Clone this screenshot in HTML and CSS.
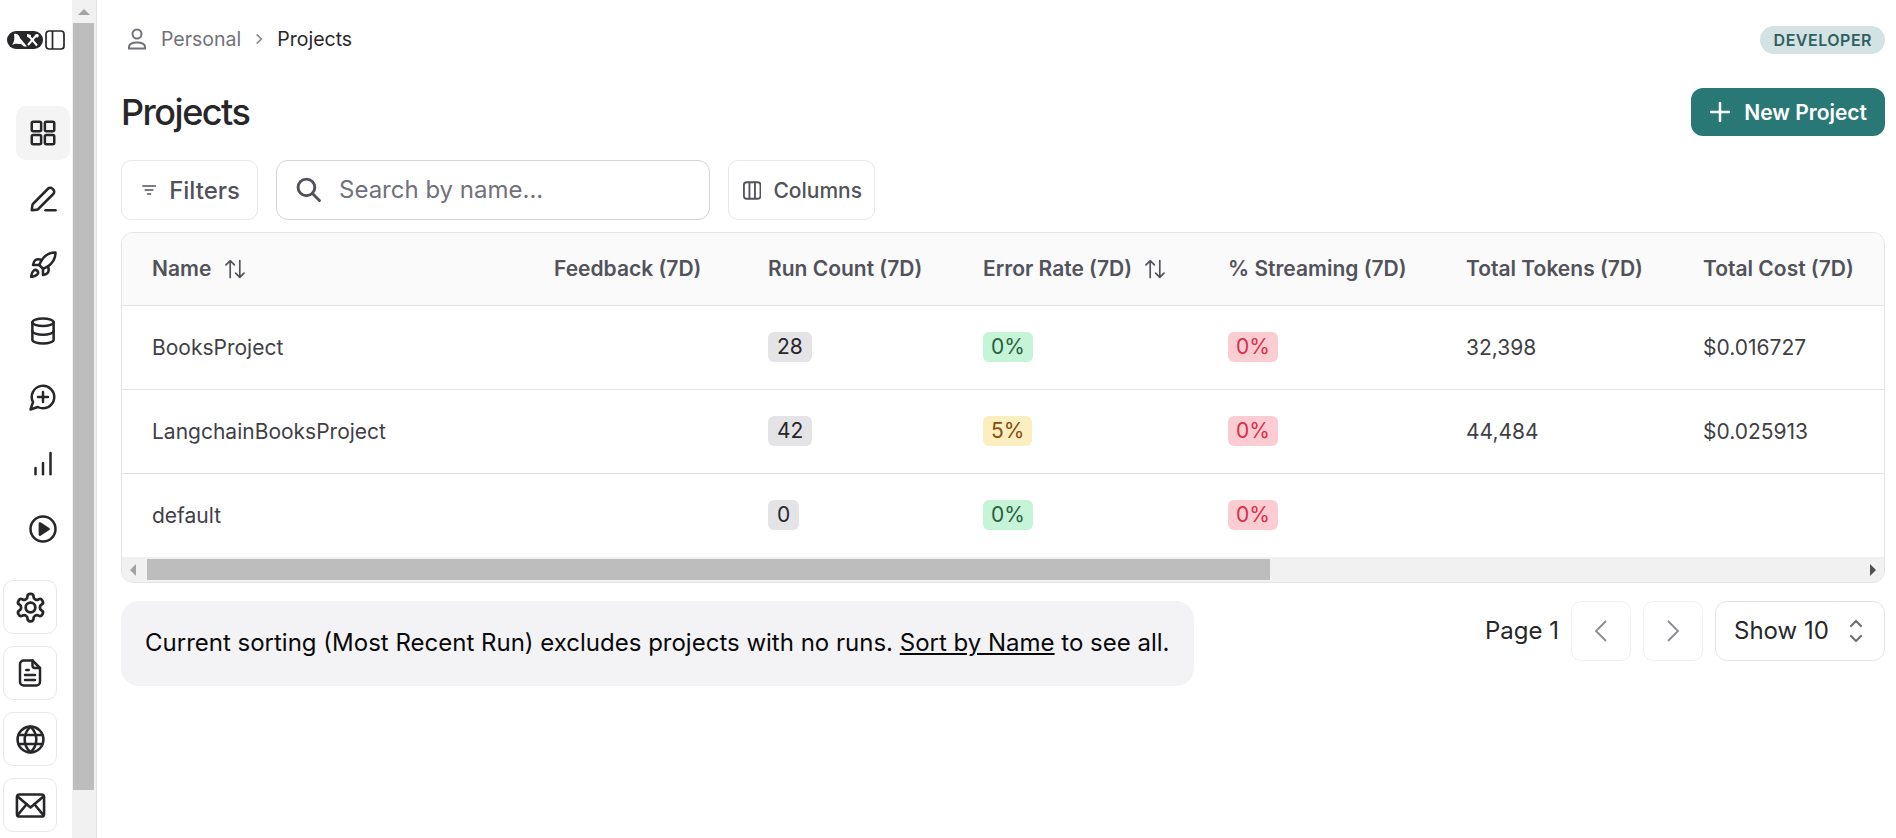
FILE: index.html
```html
<!DOCTYPE html>
<html lang="en">

<head>
  <meta charset="UTF-8">
  <meta name="viewport" content="width=device-width, initial-scale=1.0">
  <title>Projects</title>

  <link rel="stylesheet" href="styles.css">
</head>

<body>
  <div class="app">
    <aside class="sidebar">
      <div class="brand">
        <svg class="logo" viewBox="0 0 36 18">
          <rect width="36" height="18" rx="9" fill="#27272a" />
          <path d="M7 3c3-1 5 1 6 4l5 6 2 2.500h-3l-3-2.500c-3 0-6-1-9 1 2-3 3-6 2-11z" fill="#fff" />
          <path d="M21.500 4.500l8.500 10M30 3.500l-9 10.500" stroke="#fff" stroke-width="2" fill="none" />
          <path d="M20 3l4 1-1 3-3-1zM28 4l3-1 1 2-2 2z" fill="#fff" />
        </svg>
        <svg class="panel-icon" viewBox="0 0 20 20" fill="none" stroke="#27272a" stroke-width="1.700">
          <rect x="1" y="1" width="18" height="18" rx="3" />
          <path d="M7.500 1v18" />
        </svg>
      </div>

      <nav class="nav-main">
        <a class="nav-item active">
          <svg class="icon" viewBox="0 0 24 24">
            <rect x="3" y="3" width="7.500" height="7.500" rx="1.200" />
            <rect x="13.500" y="3" width="7.500" height="7.500" rx="1.200" />
            <rect x="3" y="13.500" width="7.500" height="7.500" rx="1.200" />
            <rect x="13.500" y="13.500" width="7.500" height="7.500" rx="1.200" />
          </svg>
        </a>
        <a class="nav-item">
          <svg class="icon" viewBox="0 0 24 24">
            <path d="M14 21h8" />
            <path d="M3 21l.5-4a2 2 0 0 1 .6-1.200L16 3.800a2.500 2.500 0 0 1 3.600 0l.6.6a2.500 2.500 0 0 1 0 3.600L8.200 20a2 2 0 0 1-1.200.6z" />
          </svg>
        </a>
        <a class="nav-item">
          <svg class="icon" viewBox="0 0 24 24">
            <path d="M4.500 16.500c-1.500 1.260-2 5-2 5s3.740-.5 5-2c.71-.84.7-2.130-.09-2.910a2.180 2.180 0 0 0-2.910-.09z" />
            <path d="m12 15-3-3a22 22 0 0 1 2-3.950A12.880 12.880 0 0 1 22 2c0 2.720-.78 7.500-6 11a22.350 22.350 0 0 1-4 2z" />
            <path d="M9 12H4s.55-3.030 2-4c1.620-1.080 5 0 5 0" />
            <path d="M12 15v5s3.030-.55 4-2c1.080-1.620 0-5 0-5" />
          </svg>
        </a>
        <a class="nav-item">
          <svg class="icon" viewBox="0 0 24 24">
            <ellipse cx="12" cy="5" rx="8.500" ry="3" />
            <path d="M3.500 5v14a8.500 3 0 0 0 17 0V5" />
            <path d="M3.500 12a8.500 3 0 0 0 17 0" />
          </svg>
        </a>
        <a class="nav-item">
          <svg class="icon" viewBox="0 0 24 24">
            <path d="M7.900 20A9 9 0 1 0 4 16.100L2 22z" />
            <path d="M8 12h8" />
            <path d="M12 8v8" />
          </svg>
        </a>
        <a class="nav-item">
          <svg class="icon" viewBox="0 0 24 24">
            <path d="M6 21v-5" />
            <path d="M12 21v-9" />
            <path d="M18 21V4" />
          </svg>
        </a>
        <a class="nav-item">
          <svg class="icon" viewBox="0 0 24 24">
            <circle cx="12" cy="12" r="10" />
            <path d="M9.500 7.500l7 4.500-7 4.500z" fill="#27272a" />
          </svg>
        </a>
      </nav>

      <div class="nav-bottom">
        <a class="nav-box">
          <svg class="icon icon-lg" viewBox="0 0 24 24">
            <path d="M12.220 2h-.44a2 2 0 0 0-2 2v.18a2 2 0 0 1-1 1.730l-.43.25a2 2 0 0 1-2 0l-.15-.08a2 2 0 0 0-2.730.73l-.22.38a2 2 0 0 0 .73 2.730l.15.1a2 2 0 0 1 1 1.720v.51a2 2 0 0 1-1 1.740l-.15.09a2 2 0 0 0-.73 2.730l.22.38a2 2 0 0 0 2.730.73l.15-.08a2 2 0 0 1 2 0l.43.25a2 2 0 0 1 1 1.730V20a2 2 0 0 0 2 2h.44a2 2 0 0 0 2-2v-.18a2 2 0 0 1 1-1.730l.43-.25a2 2 0 0 1 2 0l.15.08a2 2 0 0 0 2.730-.73l.22-.39a2 2 0 0 0-.73-2.730l-.15-.08a2 2 0 0 1-1-1.740v-.5a2 2 0 0 1 1-1.740l.15-.09a2 2 0 0 0 .73-2.730l-.22-.38a2 2 0 0 0-2.730-.73l-.15.08a2 2 0 0 1-2 0l-.43-.25a2 2 0 0 1-1-1.730V4a2 2 0 0 0-2-2z" />
            <circle cx="12" cy="12" r="3.500" />
          </svg>
        </a>
        <a class="nav-box">
          <svg class="icon" viewBox="0 0 24 24">
            <path d="M14 2H7a3 3 0 0 0-3 3v14a3 3 0 0 0 3 3h10a3 3 0 0 0 3-3V8z" />
            <path d="M14 2v4a2 2 0 0 0 2 2h4" />
            <path d="M9 9.500h2" />
            <path d="M8 13.500h8" />
            <path d="M8 17.500h8" />
          </svg>
        </a>
        <a class="nav-box">
          <svg class="icon icon-md" viewBox="0 0 24 24">
            <circle cx="12" cy="12" r="10" />
            <path d="M12 2c3 2.800 4.500 6.200 4.500 10s-1.500 7.200-4.500 10c-3-2.800-4.500-6.200-4.500-10S9 4.800 12 2z" />
            <path d="M3 8.500h18" />
            <path d="M3 15.500h18" />
          </svg>
        </a>
        <a class="nav-box">
          <svg class="icon icon-md" viewBox="0 0 24 24">
            <rect x="1.500" y="3.500" width="21" height="17" rx="2" />
            <path d="M2 5l10 8.500L22 5" />
            <path d="M2 19.500l7-8.500" />
            <path d="M22 19.500l-7-8.500" />
          </svg>
        </a>
      </div>
    </aside>

    <div class="page-scrollbar">
      <div class="scroll-btn"><span class="arrow-up"></span></div>
      <div class="page-thumb"></div>
    </div>

    <main class="main">
      <header class="topbar">
        <div class="crumbs">
          <svg class="crumb-user" viewBox="0 0 24 24">
            <circle cx="12" cy="7" r="4.500" />
            <path d="M4 21.500v-1.500c0-3 2.500-4.500 8-4.500s8 1.500 8 4.500v1.500z" />
          </svg>
          <span class="crumb-muted">Personal</span>
          <svg class="crumb-sep" viewBox="0 0 10 12">
            <path d="M3 2l4 4-4 4" />
          </svg>
          <span>Projects</span>
        </div>
        <span class="tier">DEVELOPER</span>
      </header>

      <div class="title-row">
        <h1>Projects</h1>
        <button class="btn-primary">
          <svg viewBox="0 0 20 20">
            <path d="M10 1v18M1 10h18" />
          </svg>
          New Project
        </button>
      </div>

      <div class="toolbar">
        <button class="btn-filter">
          <svg viewBox="0 0 18 14">
            <path d="M1 2h16M4 7h10M7 12h4" />
          </svg>
          Filters
        </button>
        <label class="search">
          <svg viewBox="0 0 24 24">
            <circle cx="10" cy="10" r="8" />
            <path d="M16 16l6.500 6.500" />
          </svg>
          <span>Search by name...</span>
        </label>
        <button class="btn-columns">
          <svg viewBox="0 0 20 20">
            <rect x="1" y="1" width="18" height="18" rx="3" />
            <path d="M7 1v18M13 1v18" />
          </svg>
          Columns
        </button>
      </div>

      <section class="table-card">
        <table>
          <colgroup>
            <col class="c-name">
            <col class="c-feedback">
            <col class="c-runs">
            <col class="c-error">
            <col class="c-stream">
            <col class="c-tokens">
            <col class="c-cost">
          </colgroup>
          <thead>
            <tr>
              <th>Name
                <svg class="sort" viewBox="0 0 20 20">
                  <path d="M6 17V3M2.500 6.500L6 3l3.500 3.500M14 3v14M10.500 13.500L14 17l3.500-3.500" />
                </svg>
              </th>
              <th>Feedback (7D)</th>
              <th>Run Count (7D)</th>
              <th>Error Rate (7D)
                <svg class="sort" viewBox="0 0 20 20">
                  <path d="M6 17V3M2.500 6.500L6 3l3.500 3.500M14 3v14M10.500 13.500L14 17l3.500-3.500" />
                </svg>
              </th>
              <th>% Streaming (7D)</th>
              <th>Total Tokens (7D)</th>
              <th>Total Cost (7D)</th>
            </tr>
          </thead>
          <tbody>
            <tr>
              <td>BooksProject</td>
              <td></td>
              <td><span class="pill grey">28</span></td>
              <td><span class="pill green">0%</span></td>
              <td><span class="pill red">0%</span></td>
              <td>32,398</td>
              <td>$0.016727</td>
            </tr>
            <tr>
              <td>LangchainBooksProject</td>
              <td></td>
              <td><span class="pill grey">42</span></td>
              <td><span class="pill yellow">5%</span></td>
              <td><span class="pill red">0%</span></td>
              <td>44,484</td>
              <td>$0.025913</td>
            </tr>
            <tr>
              <td>default</td>
              <td></td>
              <td><span class="pill grey">0</span></td>
              <td><span class="pill green">0%</span></td>
              <td><span class="pill red">0%</span></td>
              <td></td>
              <td></td>
            </tr>
          </tbody>
        </table>
        <div class="table-scrollbar">
          <span class="arrow-left"></span>
          <div class="table-thumb"></div>
          <span class="arrow-right"></span>
        </div>
      </section>

      <div class="footer-row">
        <p class="notice">Current sorting (Most Recent Run) excludes projects with no runs. <a href="#">Sort by Name</a> to see all.</p>
        <div class="pager">
          <span class="page-label">Page 1</span>
          <button class="page-btn">
            <svg viewBox="0 0 14 24">
              <path d="M12 2L2 12l10 10" />
            </svg>
          </button>
          <button class="page-btn">
            <svg viewBox="0 0 14 24">
              <path d="M2 2l10 10L2 22" />
            </svg>
          </button>
          <div class="show-select">
            <span>Show 10</span>
            <svg viewBox="0 0 14 24">
              <path d="M2 7l5-5 5 5M2 17l5 5 5-5" />
            </svg>
          </div>
        </div>
      </div>
    </main>
  </div>
</body>

</html>
```

FILE: styles.css
```css
* {
  box-sizing: border-box;
}

html,
body {
  height: 100%;
  margin: 0;
  overflow: hidden;
}

body {
  background: #fff;
  color: #18181b;
  font-family: Inter, "Liberation Sans", sans-serif;
}

button {
  background: #fff;
  cursor: pointer;
  font-family: inherit;
}

.app {
  display: flex;
  height: 838px;
}

/* sidebar */
.sidebar {
  display: flex;
  flex-direction: column;
  flex-shrink: 0;
  width: 72px;
}

.brand {
  align-items: center;
  display: flex;
  gap: 2px;
  margin-top: 30px;
  padding-left: 7px;
}

.logo {
  height: 18px;
  width: 36px;
}

.panel-icon {
  height: 20px;
  width: 20px;
}

.nav-main {
  display: flex;
  flex-direction: column;
  gap: 12px;
  margin-top: 56px;
  padding-left: 16px;
}

.nav-item {
  align-items: center;
  border-radius: 10px;
  display: flex;
  height: 54px;
  justify-content: center;
  width: 54px;
}

.nav-item.active {
  background: #f4f4f5;
}

.icon {
  fill: none;
  height: 30px;
  stroke: #27272a;
  stroke-linecap: round;
  stroke-linejoin: round;
  stroke-width: 2;
  width: 30px;
}

.icon-md {
  height: 31px;
  width: 31px;
}

.icon-lg {
  height: 33px;
  width: 33px;
}

.nav-bottom {
  display: flex;
  flex-direction: column;
  gap: 12px;
  margin-top: 24px;
  padding-left: 3px;
}

.nav-box {
  align-items: center;
  border: 1px solid #e8e8ea;
  border-radius: 10px;
  display: flex;
  height: 54px;
  justify-content: center;
  width: 54px;
}

/* page scrollbar */
.page-scrollbar {
  background: #f1f1f1;
  border-right: 1px solid #e4e4e7;
  flex-shrink: 0;
  padding: 0 2px 0 1px;
  width: 25px;
}

.scroll-btn {
  display: flex;
  height: 23px;
  justify-content: center;
  padding-top: 9px;
}

.arrow-up {
  border-bottom: 6px solid #a3a3a3;
  border-left: 6px solid transparent;
  border-right: 6px solid transparent;
  height: 0;
  width: 0;
}

.page-thumb {
  background: #bdbdbd;
  height: 767px;
}

/* main column */
.main {
  flex: 1;
  min-width: 0;
  padding: 0 11px 0 24px;
}

.topbar {
  align-items: center;
  display: flex;
  height: 78px;
  justify-content: space-between;
}

.crumbs {
  align-items: center;
  color: #27272a;
  display: flex;
  font-size: 19.500px;
  gap: 12px;
  padding-left: 4px;
}

.crumb-user {
  fill: none;
  height: 24px;
  stroke: #71717a;
  stroke-width: 2;
  width: 24px;
}

.crumb-muted {
  color: #71717a;
}

.crumb-sep {
  fill: none;
  height: 14px;
  stroke: #8e8e96;
  stroke-width: 1.500;
  width: 12px;
}

.tier {
  align-items: center;
  background: #d3e2e2;
  border-radius: 14px;
  color: #2f5f60;
  display: flex;
  font-size: 16px;
  font-weight: 600;
  height: 28px;
  letter-spacing: 0.5px;
  margin-top: 2px;
  padding: 0 13px 0 14px;
}

.title-row {
  align-items: flex-start;
  display: flex;
  height: 82px;
  justify-content: space-between;
  padding-top: 10px;
}

h1 {
  color: #27272a;
  font-size: 36px;
  font-weight: 500;
  letter-spacing: -1.500px;
  line-height: 48px;
  margin: -10px 0 0;
  padding-top: 10px;
}

.btn-primary {
  align-items: center;
  background: #2a7876;
  border: 0;
  border-radius: 12px;
  color: #fff;
  display: flex;
  font-size: 21px;
  font-weight: 600;
  gap: 14px;
  height: 48px;
  padding: 0 18px 0 19px;
}

.btn-primary svg {
  fill: none;
  height: 20px;
  stroke: #fff;
  stroke-linecap: round;
  stroke-width: 2.500;
  width: 20px;
}

.toolbar {
  display: flex;
  gap: 18px;
}

.btn-filter,
.btn-columns {
  align-items: center;
  border: 1px solid #e8e8ea;
  border-radius: 10px;
  color: #52525b;
  display: flex;
  font-weight: 500;
  height: 60px;
  padding-bottom: 1px;
}

.btn-filter {
  font-size: 24px;
  gap: 13px;
  padding-left: 20px;
  padding-right: 17px;
  width: 137px;
}

.btn-filter svg {
  fill: none;
  height: 14px;
  stroke: #52525b;
  stroke-linecap: round;
  stroke-width: 1.800;
  width: 18px;
}

.search {
  align-items: center;
  border: 1px solid #d4d4d8;
  border-radius: 12px;
  color: #71717a;
  display: flex;
  font-size: 24px;
  gap: 18px;
  height: 60px;
  padding: 0 0 1px 19px;
  width: 434px;
}

.search svg {
  fill: none;
  height: 25px;
  stroke: #52525b;
  stroke-linecap: round;
  stroke-width: 2.800;
  width: 25px;
}

.btn-columns {
  font-size: 21px;
  gap: 12px;
  padding-left: 14px;
  padding-right: 12px;
  width: 147px;
}

.btn-columns svg {
  fill: none;
  height: 21px;
  stroke: #52525b;
  stroke-width: 2;
  width: 21px;
}

/* table */
.table-card {
  border: 1px solid #e4e4e7;
  border-radius: 12px;
  margin-top: 12px;
  overflow: hidden;
}

table {
  border-collapse: collapse;
  table-layout: fixed;
  width: 100%;
}

.c-name { width: 402px; }
.c-feedback { width: 214px; }
.c-runs { width: 215px; }
.c-error { width: 245px; }
.c-stream { width: 238px; }
.c-tokens { width: 237px; }

th {
  background: #fafafa;
  color: #52525b;
  font-size: 21px;
  font-weight: 600;
  height: 72px;
  padding: 0 0 0 30px;
  text-align: left;
  white-space: nowrap;
}

td {
  border-top: 1px solid #e4e4e7;
  color: #3f3f46;
  font-size: 21px;
  height: 84px;
  padding: 0 0 0 30px;
  white-space: nowrap;
}

.sort {
  fill: none;
  height: 24px;
  margin-left: 6px;
  stroke: #52525b;
  stroke-linecap: round;
  stroke-linejoin: round;
  stroke-width: 1.400;
  vertical-align: -5px;
  width: 24px;
}

.pill {
  border-radius: 6px;
  display: inline-block;
  line-height: 30px;
  padding: 0 9px;
}

.grey { background: #e4e4e7; color: #27272a; }
.green { background: #c6f4d6; color: #2a5f42; padding: 0 8px; }
.yellow { background: #fbeec1; color: #854d0e; padding: 0 8px; }
.red { background: #fbcdd3; color: #d92d4a; padding: 0 8px; }

.table-scrollbar {
  align-items: center;
  background: #f1f1f1;
  display: flex;
  height: 25px;
  padding: 0 8px;
}

.arrow-left {
  border-bottom: 6px solid transparent;
  border-right: 6px solid #a3a3a3;
  border-top: 6px solid transparent;
  height: 0;
  width: 0;
}

.table-thumb {
  background: #bdbdbd;
  height: 21px;
  margin-left: 11px;
  width: 1123px;
}

.arrow-right {
  border-bottom: 6px solid transparent;
  border-left: 6px solid #505050;
  border-top: 6px solid transparent;
  height: 0;
  margin-left: auto;
  width: 0;
}

/* below the table */
.footer-row {
  align-items: flex-start;
  display: flex;
  justify-content: space-between;
  margin-top: 18px;
}

.notice {
  background: #f3f3f5;
  border-radius: 18px;
  color: #09090b;
  font-size: 24px;
  margin: 0;
  padding: 27px 24px 29px;
  width: 1073px;
}

.notice a {
  color: inherit;
}

.pager {
  align-items: center;
  display: flex;
  gap: 12px;
}

.page-label {
  color: #27272a;
  font-size: 24px;
  margin-bottom: 2px;
}

.page-btn {
  align-items: center;
  border: 1px solid #f0f0f1;
  border-radius: 10px;
  display: flex;
  height: 60px;
  justify-content: center;
  padding: 0;
  width: 60px;
}

.page-btn svg {
  fill: none;
  height: 24px;
  stroke: #8a8a90;
  stroke-width: 1.800;
  width: 14px;
}

.show-select {
  align-items: center;
  border: 1px solid #e4e4e7;
  border-radius: 12px;
  color: #27272a;
  display: flex;
  font-size: 24px;
  height: 60px;
  justify-content: space-between;
  padding: 0 21px 0 18px;
  width: 170px;
}

.show-select span {
  margin-bottom: 2px;
}

.show-select svg {
  fill: none;
  height: 24px;
  stroke: #71717a;
  stroke-linecap: round;
  stroke-linejoin: round;
  stroke-width: 2.200;
  width: 14px;
}
```
